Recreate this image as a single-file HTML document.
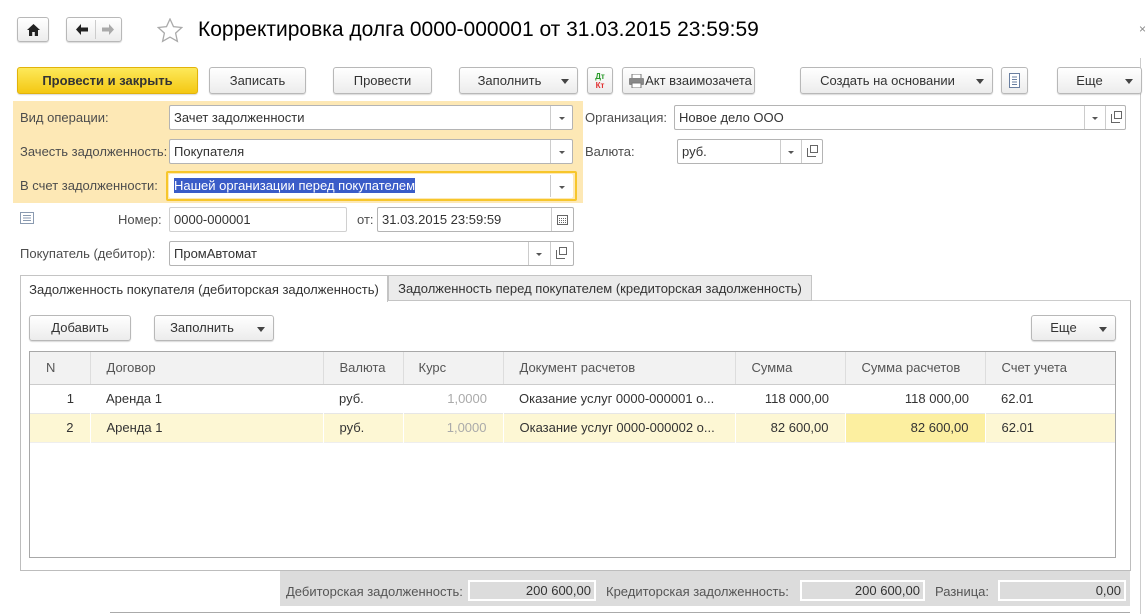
<!DOCTYPE html>
<html><head><meta charset="utf-8"><style>
*{box-sizing:border-box}
body{margin:0;width:1147px;height:614px;background:#fff;font-family:"Liberation Sans",Arial,sans-serif;font-size:13px;color:#333;position:relative;overflow:hidden}
.a{position:absolute}
.btn{position:absolute;height:27px;border:1px solid #b8b8b8;border-radius:3px;background:linear-gradient(#fff,#ececec);box-shadow:0 1px 1px rgba(0,0,0,.15);text-align:center;line-height:25px;color:#333;white-space:nowrap}
.dd::after{content:"";position:absolute;right:8px;top:11px;border-left:4px solid transparent;border-right:4px solid transparent;border-top:5px solid #444}
.inp{position:absolute;height:25px;border:1px solid #b4b4b4;border-radius:2px;background:#fff;line-height:23px;padding-left:4px;color:#333;white-space:nowrap}
.sep{position:absolute;top:0;bottom:0;width:1px;background:#ccc}
.tri{position:absolute;top:11px;border-left:3px solid transparent;border-right:3px solid transparent;border-top:3px solid #555}
.op{position:absolute;top:6px;width:9px;height:9px;border:1px solid #666;border-top:none;border-right:none}
.op::after{content:"";position:absolute;left:2px;top:-3px;width:6px;height:6px;border:1px solid #666;background:#fff}
.lbl{position:absolute;color:#4d4d4d;white-space:nowrap}
table{border-collapse:collapse}
td{height:29px;padding:0;white-space:nowrap}
</style></head><body>
<div class="a" style="left:1140px;top:58px;width:1px;height:556px;background:#ccc"></div>
<div class="a" style="left:1139px;top:22px;color:#888;font-size:12px">×</div>
<!-- nav -->
<div class="btn" style="left:17px;top:17px;width:32px;height:25px">
<svg class="a" style="left:9px;top:6px" width="13" height="12" viewBox="0 0 13 12"><path d="M6.5 0L0 6h2v6h3.2V8h2.6v4H11V6h2z" fill="#222"/></svg></div>
<div class="btn" style="left:66px;top:17px;width:56px;height:25px">
<div class="a" style="left:28px;top:2px;width:1px;height:19px;background:#ccc"></div>
<svg class="a" style="left:9px;top:6px" width="12" height="11"><path d="M0 5.5L5 0v3.5h7v4H5V11z" fill="#222"/></svg>
<svg class="a" style="left:35px;top:6px" width="12" height="11"><path d="M12 5.5L7 0v3.5H0v4h7V11z" fill="#aaa"/></svg></div>
<svg class="a" style="left:157px;top:18px" width="26" height="25" viewBox="0 0 26 25"><path d="M13 1l3.5 7.6 8.3.9-6.2 5.6 1.8 8.2L13 19.1 5.6 23.3l1.8-8.2L1.2 9.5l8.3-.9z" fill="none" stroke="#aaa" stroke-width="1.3"/></svg>
<div class="a" style="left:198px;top:18px;font-size:21px;color:#000;white-space:nowrap">Корректировка долга 0000-000001 от 31.03.2015 23:59:59</div>
<!-- toolbar -->
<div class="btn" style="left:17px;top:67px;width:181px;background:linear-gradient(#fde95a,#f4c813);border-color:#e2b30a;font-weight:bold;color:#333">Провести и закрыть</div>
<div class="btn" style="left:209px;top:67px;width:97px">Записать</div>
<div class="btn" style="left:333px;top:67px;width:99px">Провести</div>
<div class="btn dd" style="left:459px;top:67px;width:119px;padding-right:18px">Заполнить</div>
<div class="btn" style="left:587px;top:67px;width:26px;font-size:8px;line-height:9px;font-weight:bold;padding-top:4px"><span style="color:#2a9a2a">Дт</span><br><span style="color:#e03030">Кт</span></div>
<div class="btn" style="left:622px;top:67px;width:133px;padding-left:20px">Акт взаимозачета
<svg class="a" style="left:6px;top:6px" width="15" height="14"><rect x="3" y="0" width="9" height="5" fill="#fff" stroke="#777"/><rect x="0" y="4" width="15" height="7" rx="1" fill="#888"/><rect x="3" y="9" width="9" height="5" fill="#fff" stroke="#777"/></svg></div>
<div class="btn dd" style="left:800px;top:67px;width:193px;padding-right:18px">Создать на основании</div>
<div class="btn" style="left:1001px;top:67px;width:27px">
<svg class="a" style="left:7px;top:5px" width="11" height="15"><rect x=".5" y=".5" width="10" height="14" fill="#fff" stroke="#6a7fa0"/><path d="M3 4h5M3 6.5h5M3 9h5M3 11.5h5" stroke="#6a7fa0"/></svg></div>
<div class="btn dd" style="left:1057px;top:67px;width:85px;padding-right:20px">Еще</div>
<!-- yellow panel -->
<div class="a" style="left:13px;top:101px;width:570px;height:102px;background:#fde8b5"></div>
<div class="lbl" style="left:20px;top:110px">Вид операции:</div>
<div class="inp" style="left:169px;top:105px;width:404px">Зачет задолженности<div class="sep" style="left:380px"></div><div class="tri" style="left:389px"></div></div>
<div class="lbl" style="left:20px;top:144px">Зачесть задолженность:</div>
<div class="inp" style="left:169px;top:139px;width:404px">Покупателя<div class="sep" style="left:380px"></div><div class="tri" style="left:389px"></div></div>
<div class="lbl" style="left:20px;top:178px">В счет задолженности:</div>
<div class="a" style="left:166px;top:171px;width:411px;height:30px;border:2px solid #f7c62b;border-radius:2px"></div>
<div class="inp" style="left:169px;top:174px;width:404px;border-color:#fff;height:24px;line-height:22px"><span style="background:#3a5cc8;color:#fff">Нашей организации перед покупателем</span><div class="sep" style="left:380px"></div><div class="tri" style="left:389px"></div></div>
<!-- right fields -->
<div class="lbl" style="left:585px;top:110px">Организация:</div>
<div class="inp" style="left:674px;top:105px;width:452px">Новое дело ООО<div class="sep" style="left:409px"></div><div class="tri" style="left:417px"></div><div class="sep" style="left:430px"></div><div class="op" style="left:436px;top:8px"></div></div>
<div class="lbl" style="left:585px;top:144px">Валюта:</div>
<div class="inp" style="left:677px;top:139px;width:146px">руб.<div class="sep" style="left:102px"></div><div class="tri" style="left:110px"></div><div class="sep" style="left:123px"></div><div class="op" style="left:129px;top:8px"></div></div>
<!-- number -->
<svg class="a" style="left:20px;top:212px" width="14" height="12"><rect x=".5" y=".5" width="13" height="11" fill="#fff" stroke="#8a9ab0"/><path d="M3 3.5h8M3 6h8M3 8.5h8" stroke="#8a9ab0"/></svg>
<div class="lbl" style="left:118px;top:212px">Номер:</div>
<div class="inp" style="left:169px;top:207px;width:178px;border-color:#d0d0d0">0000-000001</div>
<div class="lbl" style="left:357px;top:212px">от:</div>
<div class="inp" style="left:377px;top:207px;width:197px">31.03.2015 23:59:59<div class="sep" style="left:173px"></div>
<svg class="a" style="left:179px;top:7px" width="11" height="10"><rect x=".5" y=".5" width="10" height="9" fill="#fff" stroke="#666"/><path d="M2 3.5h7M2 5.5h7M2 7.5h7" stroke="#666" stroke-dasharray="1 1"/></svg></div>
<div class="lbl" style="left:20px;top:246px">Покупатель (дебитор):</div>
<div class="inp" style="left:169px;top:241px;width:405px">ПромАвтомат<div class="sep" style="left:358px"></div><div class="tri" style="left:366px"></div><div class="sep" style="left:380px"></div><div class="op" style="left:386px;top:8px"></div></div>
<!-- tabs -->
<div class="a" style="left:20px;top:300px;width:1111px;height:271px;border:1px solid #bdbdbd;border-top:1px solid #ccc"></div>
<div class="a" style="left:388px;top:275px;width:424px;height:26px;background:#ebebeb;border:1px solid #c4c4c4;line-height:25px;text-align:center;color:#333">Задолженность перед покупателем (кредиторская задолженность)</div>
<div class="a" style="left:20px;top:275px;width:368px;height:27px;background:#fff;border:1px solid #c4c4c4;border-bottom:none;line-height:27px;text-align:center;color:#333">Задолженность покупателя (дебиторская задолженность)</div>
<div class="btn" style="left:29px;top:315px;width:102px;height:26px;line-height:24px">Добавить</div>
<div class="btn dd" style="left:154px;top:315px;width:120px;height:26px;line-height:24px;padding-right:24px">Заполнить</div>
<div class="btn dd" style="left:1031px;top:315px;width:85px;height:26px;line-height:24px;padding-right:20px">Еще</div>
<!-- table -->
<div class="a" style="left:29px;top:351px;width:1087px;height:207px;border:1px solid #a8a8a8"></div>
<table class="a" style="left:30px;top:352px;width:1085px">
<tr style="background:#f2f2f2;color:#555">
<td style="width:60px;height:32px;padding-left:16px;border-right:1px solid #ddd;border-bottom:1px solid #ccc">N</td>
<td style="width:233px;padding-left:16px;border-right:1px solid #ddd;border-bottom:1px solid #ccc">Договор</td>
<td style="width:80px;padding-left:16px;border-right:1px solid #ddd;border-bottom:1px solid #ccc">Валюта</td>
<td style="width:100px;padding-left:15px;border-right:1px solid #ddd;border-bottom:1px solid #ccc">Курс</td>
<td style="width:232px;padding-left:16px;border-right:1px solid #ddd;border-bottom:1px solid #ccc">Документ расчетов</td>
<td style="width:110px;padding-left:16px;border-right:1px solid #ddd;border-bottom:1px solid #ccc">Сумма</td>
<td style="width:140px;padding-left:16px;border-right:1px solid #ddd;border-bottom:1px solid #ccc">Сумма расчетов</td>
<td style="padding-left:16px;border-bottom:1px solid #ccc">Счет учета</td></tr>
<tr style="border-bottom:1px solid #e6e6e6">
<td style="text-align:right;padding-right:16px">1</td><td style="padding-left:16px">Аренда 1</td><td style="padding-left:16px">руб.</td><td style="text-align:right;padding-right:16px;color:#aaa">1,0000</td><td style="padding-left:16px">Оказание услуг 0000-000001 о...</td><td style="text-align:right;padding-right:16px">118 000,00</td><td style="text-align:right;padding-right:16px">118 000,00</td><td style="padding-left:16px">62.01</td></tr>
<tr style="background:#fdf7d4;border-bottom:1px solid #eee">
<td style="text-align:right;padding-right:16px;border-right:1px solid #fff">2</td><td style="padding-left:16px;border-right:1px solid #fff">Аренда 1</td><td style="padding-left:16px;border-right:1px solid #fff">руб.</td><td style="text-align:right;padding-right:16px;color:#aaa;border-right:1px solid #fff">1,0000</td><td style="padding-left:16px;border-right:1px solid #fff">Оказание услуг 0000-000002 о...</td><td style="text-align:right;padding-right:16px;border-right:1px solid #fff">82 600,00</td><td style="text-align:right;padding-right:16px;background:#fcefa0;border-right:1px solid #fff">82 600,00</td><td style="padding-left:16px">62.01</td></tr>
</table>
<!-- footer -->
<div class="a" style="left:280px;top:571px;width:850px;height:35px;background:#dcdcdc"></div>
<div class="lbl" style="left:286px;top:584px;color:#555">Дебиторская задолженность:</div>
<div class="a" style="left:468px;top:580px;width:128px;height:21px;border:2px solid #fff;text-align:right;padding-right:3px;line-height:17px;color:#333">200 600,00</div>
<div class="lbl" style="left:606px;top:584px;color:#555">Кредиторская задолженность:</div>
<div class="a" style="left:800px;top:580px;width:125px;height:21px;border:2px solid #fff;text-align:right;padding-right:3px;line-height:17px;color:#333">200 600,00</div>
<div class="lbl" style="left:935px;top:584px;color:#555">Разница:</div>
<div class="a" style="left:998px;top:580px;width:128px;height:21px;border:2px solid #fff;text-align:right;padding-right:3px;line-height:17px;color:#333">0,00</div>
<div class="a" style="left:110px;top:612px;width:1020px;height:1px;background:#aaa"></div>
</body></html>
